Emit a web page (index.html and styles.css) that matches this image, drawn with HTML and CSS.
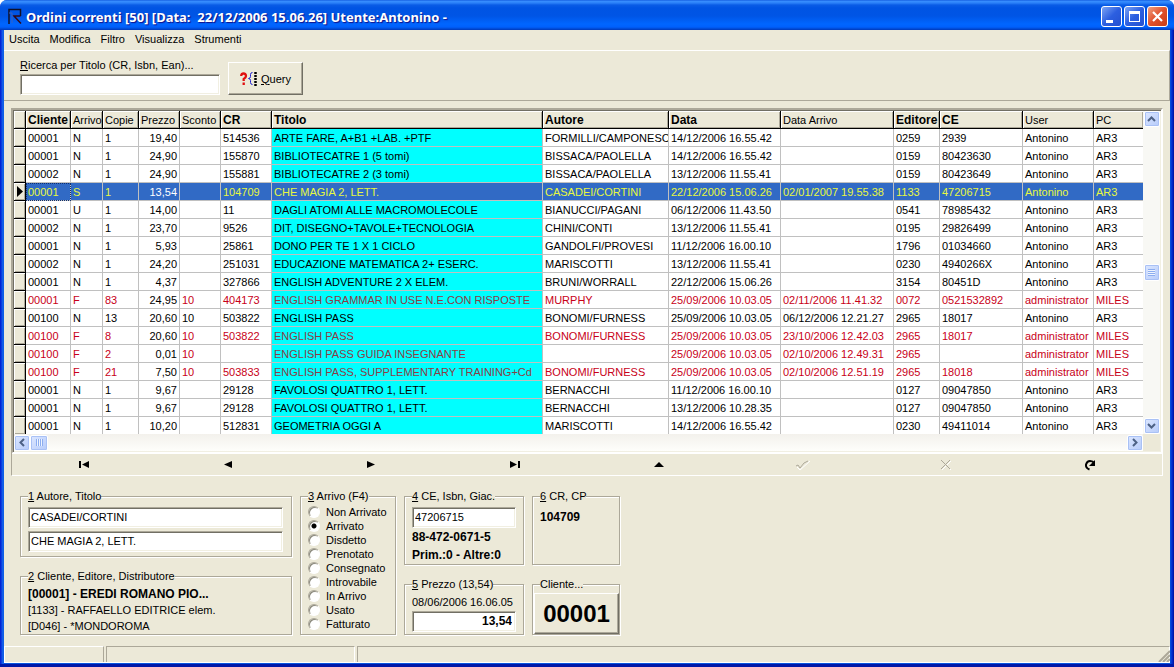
FILE: index.html
```html
<!DOCTYPE html>
<html lang="it">
<head>
<meta charset="utf-8">
<title>Ordini correnti</title>
<link rel="stylesheet" href="styles.css">
</head>
<body>
<div class="window">
  <header class="titlebar">
    <svg class="app-icon" width="16" height="17" viewBox="0 0 16 17" fill="none" stroke-width="1.5"><path d="M1 16V1.500H12.500V8" stroke="#101028"/><path d="M12.500 8H6L13 15.500" stroke="#300818"/><path d="M4 15V5H1" stroke="#3a62c0" stroke-width="1"/></svg>
    <h1>Ordini correnti [50] [Data: &nbsp;22/12/2006 15.06.26] Utente:Antonino -</h1>
    <div class="window-buttons">
      <button class="wbtn" aria-label="Riduci"><svg width="19" height="19"><path d="M4 13h7v3H4z" fill="#fff"/></svg></button>
      <button class="wbtn" aria-label="Ingrandisci"><svg width="19" height="19"><path d="M4 4h11v11H4zM5 7v7h9V7z" fill="#fff" fill-rule="evenodd"/></svg></button>
      <button class="wbtn close" aria-label="Chiudi"><svg width="19" height="19"><path d="M5 5l9 9M14 5l-9 9" stroke="#fff" stroke-width="2.200"/></svg></button>
    </div>
  </header>
  <div class="client">
    <nav class="menu">
      <button>Uscita</button><button>Modifica</button><button>Filtro</button><button>Visualizza</button><button>Strumenti</button>
    </nav>
    <form class="toolbar">
      <div class="search">
        <label for="q"><u>R</u>icerca per Titolo (CR, Isbn, Ean)...</label>
        <input id="q" class="field" type="text">
      </div>
      <button class="query" type="button">
        <svg width="18" height="15" viewBox="0 0 18 15" fill="none"><path d="M1.200 5Q1.200 2.500 3.500 2.500T6 5Q6 6.500 3.700 8V10M3.700 11.500V14" stroke="#e01010" stroke-width="2.300"/><path d="M12.500 1.500Q10.500 1.500 10.500 3.500V5.500Q10.500 7.500 8.500 7.500Q10.500 7.500 10.500 9.500V11.500Q10.500 13.500 12.500 13.500" stroke="#2020d0"/><path d="M15.500 1V15" stroke="#000" stroke-width="2.500" stroke-dasharray="2 1"/></svg>
        <span><u>Q</u>uery</span>
      </button>
    </form>
    <main class="main">
      <section class="panel">
        <div class="grid">
          <div class="grid-body">
            <table>
              <colgroup><col class="c-ind"><col class="c-cli"><col class="c-arr"><col class="c-cop"><col class="c-pre"><col class="c-sco"><col class="c-cr"><col><col class="c-aut"><col class="c-dat"><col class="c-arrd"><col class="c-edi"><col class="c-ce"><col class="c-usr"><col class="c-pc"></colgroup>
              <thead><tr><th></th><th class="b">Cliente</th><th>Arrivo</th><th>Copie</th><th>Prezzo</th><th>Sconto</th><th class="b">CR</th><th class="b">Titolo</th><th class="b">Autore</th><th class="b">Data</th><th>Data Arrivo</th><th class="b">Editore</th><th class="b">CE</th><th>User</th><th>PC</th></tr></thead>
              <tbody id="rows"></tbody>
            </table>
            <div class="vscroll">
              <button class="sbtn" aria-label="Su"><svg width="9" height="6"><path d="M1 5l3.500-3.500L8 5" class="chev"/></svg></button>
              <div class="track"><div class="thumb"></div></div>
              <button class="sbtn" aria-label="Giù"><svg width="9" height="6"><path d="M1 1l3.500 3.500L8 1" class="chev"/></svg></button>
            </div>
          </div>
          <div class="hscroll">
            <div class="hbar">
              <button class="sbtn" aria-label="Sinistra"><svg width="6" height="9"><path d="M5 1L1.500 4.500L5 8" class="chev"/></svg></button>
              <div class="track"><div class="thumb"></div></div>
              <button class="sbtn" aria-label="Destra"><svg width="6" height="9"><path d="M1 1l3.500 3.500L1 8" class="chev"/></svg></button>
            </div>
          </div>
        </div>
        <div class="navigator">
          <button aria-label="Primo"><svg width="12" height="9"><path d="M1 1h2v7H1zM11 1v7L4 4.500z"/></svg></button>
          <button aria-label="Precedente"><svg width="12" height="9"><path d="M10 1v7L2 4.500z"/></svg></button>
          <button aria-label="Successivo"><svg width="12" height="9"><path d="M2 1v7l8-3.500z"/></svg></button>
          <button aria-label="Ultimo"><svg width="12" height="9"><path d="M1 1v7l7-3.500zM9 1h2v7H9z"/></svg></button>
          <button aria-label="Modifica"><svg width="12" height="9"><path d="M1 7h10L6 2z"/></svg></button>
          <button aria-label="Conferma" disabled><svg width="16" height="12" fill="none"><path d="M2 8l3 3L15 2" stroke="#fff"/><path d="M1 7l2-1 2 3 4-5 4-2" stroke="#aca899"/></svg></button>
          <button aria-label="Annulla" disabled><svg width="14" height="12" fill="none"><path d="M3 2l9 9M12 2l-9 9" stroke="#fff"/><path d="M2 1l9 9M11 1l-9 9" stroke="#aca899"/></svg></button>
          <button aria-label="Aggiorna"><svg width="12" height="12"><path d="M5.500 10.500Q1.500 9 2 5.500Q3 2 6 2T10 4" fill="none" stroke="#000" stroke-width="2"/><path d="M11 1v6H5z"/></svg></button>
        </div>
      </section>
      <section class="details">
        <div class="col c1">
          <fieldset class="fs-author">
            <legend><u>1</u> Autore, Titolo</legend>
            <input class="field" aria-label="Autore" value="CASADEI/CORTINI">
            <input class="field" aria-label="Titolo" value="CHE MAGIA 2, LETT.">
          </fieldset>
          <fieldset class="fs-client">
            <legend><u>2</u> Cliente, Editore, Distributore</legend>
            <strong>[00001] - EREDI ROMANO PIO...</strong>
            <p>[1133] - RAFFAELLO EDITRICE elem.</p>
            <p>[D046] - *MONDOROMA</p>
          </fieldset>
        </div>
        <div class="col c2">
          <fieldset class="fs-arrivo">
            <legend><u>3</u> Arrivo (F4)</legend>
            <label><input type="radio" name="arrivo">Non Arrivato</label>
            <label><input type="radio" name="arrivo" checked>Arrivato</label>
            <label><input type="radio" name="arrivo">Disdetto</label>
            <label><input type="radio" name="arrivo">Prenotato</label>
            <label><input type="radio" name="arrivo">Consegnato</label>
            <label><input type="radio" name="arrivo">Introvabile</label>
            <label><input type="radio" name="arrivo">In Arrivo</label>
            <label><input type="radio" name="arrivo">Usato</label>
            <label><input type="radio" name="arrivo">Fatturato</label>
          </fieldset>
        </div>
        <div class="col c3">
          <fieldset class="fs-ce">
            <legend><u>4</u> CE, Isbn, Giac.</legend>
            <input class="field" aria-label="CE" value="47206715">
            <strong>88-472-0671-5</strong>
            <strong>Prim.:0 - Altre:0</strong>
          </fieldset>
          <fieldset class="fs-price">
            <legend><u>5</u> Prezzo (13,54)</legend>
            <p>08/06/2006 16.06.05</p>
            <input class="field price" aria-label="Prezzo" value="13,54">
          </fieldset>
        </div>
        <div class="col c4">
          <fieldset class="fs-cr">
            <legend><u>6</u> CR, CP</legend>
            <strong>104709</strong>
          </fieldset>
          <fieldset class="fs-code">
            <legend>Cliente...</legend>
            <button class="code" type="button">00001</button>
          </fieldset>
        </div>
      </section>
    </main>
    <footer class="status">
      <div class="s1"></div><div class="s2"></div><div class="s3"></div>
      <svg class="grip" width="12" height="12"><path d="M1 12L12 1M5 12l7-7M9 12l3-3" stroke="#aca899" stroke-width="2"/></svg>
    </footer>
  </div>
</div>
<script src="rows.js"></script>
</body>
</html>
```
FILE: rows.js
```js
const A = "Antonino", M = "administrator";
const rows = [
  ["00001","N","1","19,40","","514536","ARTE FARE, A+B1 +LAB. +PTF","FORMILLI/CAMPONESC","14/12/2006 16.55.42","","0259","2939",A,"AR3"],
  ["00001","N","1","24,90","","155870","BIBLIOTECATRE 1 (5 tomi)","BISSACA/PAOLELLA","14/12/2006 16.55.42","","0159","80423630",A,"AR3"],
  ["00002","N","1","24,90","","155881","BIBLIOTECATRE 2 (3 tomi)","BISSACA/PAOLELLA","13/12/2006 11.55.41","","0159","80423649",A,"AR3"],
  ["00001","S","1","13,54","","104709","CHE MAGIA 2, LETT.","CASADEI/CORTINI","22/12/2006 15.06.26","02/01/2007 19.55.38","1133","47206715",A,"AR3"],
  ["00001","U","1","14,00","","11","DAGLI ATOMI ALLE MACROMOLECOLE","BIANUCCI/PAGANI","06/12/2006 11.43.50","","0541","78985432",A,"AR3"],
  ["00002","N","1","23,70","","9526","DIT, DISEGNO+TAVOLE+TECNOLOGIA","CHINI/CONTI","13/12/2006 11.55.41","","0195","29826499",A,"AR3"],
  ["00001","N","1","5,93","","25861","DONO PER TE 1 X 1 CICLO","GANDOLFI/PROVESI","11/12/2006 16.00.10","","1796","01034660",A,"AR3"],
  ["00002","N","1","24,20","","251031","EDUCAZIONE MATEMATICA 2+ ESERC.","MARISCOTTI","13/12/2006 11.55.41","","0230","4940266X",A,"AR3"],
  ["00001","N","1","4,37","","327866","ENGLISH ADVENTURE 2 X ELEM.","BRUNI/WORRALL","22/12/2006 15.06.26","","3154","80451D",A,"AR3"],
  ["00001","F","83","24,95","10","404173","ENGLISH GRAMMAR IN USE N.E.CON RISPOSTE","MURPHY","25/09/2006 10.03.05","02/11/2006 11.41.32","0072","0521532892",M,"MILES"],
  ["00100","N","13","20,60","10","503822","ENGLISH PASS","BONOMI/FURNESS","25/09/2006 10.03.05","06/12/2006 12.21.27","2965","18017",A,"AR3"],
  ["00100","F","8","20,60","10","503822","ENGLISH PASS","BONOMI/FURNESS","25/09/2006 10.03.05","23/10/2006 12.42.03","2965","18017",M,"MILES"],
  ["00100","F","2","0,01","10","","ENGLISH PASS GUIDA INSEGNANTE","","25/09/2006 10.03.05","02/10/2006 12.49.31","2965","",M,"MILES"],
  ["00100","F","21","7,50","10","503833","ENGLISH PASS, SUPPLEMENTARY TRAINING+Cd","BONOMI/FURNESS","25/09/2006 10.03.05","02/10/2006 12.51.19","2965","18018",M,"MILES"],
  ["00001","N","1","9,67","","29128","FAVOLOSI QUATTRO 1, LETT.","BERNACCHI","11/12/2006 16.00.10","","0127","09047850",A,"AR3"],
  ["00001","N","1","9,67","","29128","FAVOLOSI QUATTRO 1, LETT.","BERNACCHI","13/12/2006 10.28.35","","0127","09047850",A,"AR3"],
  ["00001","N","1","10,20","","512831","GEOMETRIA OGGI A","MARISCOTTI","14/12/2006 16.55.42","","0230","49411014",A,"AR3"]
];
const classes = { 3: "price-cell", 6: "title-cell" };
const body = document.getElementById("rows");
for (const row of rows) {
  const tr = body.insertRow();
  const marker = tr.insertCell();
  marker.className = "ind";
  if (row[1] === "F") tr.className = "billed";
  if (row[1] === "S") {
    tr.className = "selected";
    marker.innerHTML = '<svg width="7" height="11"><path d="M1 0l6 5.500L1 11z"/></svg>';
  }
  row.forEach((text, i) => {
    const td = tr.insertCell();
    td.textContent = text;
    if (classes[i]) td.className = classes[i];
  });
}
```
FILE: styles.css
```css
* { box-sizing: border-box; }
body {
  margin: 0;
  background: #fff;
  color: #000;
  font: 11px/14px "Liberation Sans", Arial, sans-serif;
}
button, input { font: inherit; color: inherit; margin: 0; }
button { padding: 0; border: 0; background: none; }
p { margin: 0; }
svg { display: block; flex: none; }

.window {
  min-height: 100vh;
  display: flex;
  flex-direction: column;
  padding: 0 4px 4px;
  background: linear-gradient(90deg, #0019cf 0, #0831d9 1px, #166aee 3px, #0855dd 4px, #0855dd calc(100% - 4px), #0441d8 calc(100% - 3px), #001dc0 calc(100% - 1px), #00138c);
  border-radius: 7px 7px 0 0;
  overflow: hidden;
  box-shadow: inset 0 -3px 0 #0018a8;
}
.titlebar {
  height: 30px;
  margin: 0 -4px;
  padding: 3px 6px 0 8px;
  display: flex;
  align-items: center;
  gap: 2px;
  background: linear-gradient(#0a50d8 0, #3a90ff 1px, #2a80f8 3px, #0a5ce6 5px, #0054e3 8px, #0055e5 16px, #0066ff 24px, #0060fc 27px, #0047d0 29px, #0038b8);
}
.titlebar h1 {
  flex: 1;
  margin: 0;
  color: #fff;
  font: bold 13px/18px "Noto Sans", sans-serif;
  text-shadow: 1px 1px 1px #0f1089;
  white-space: nowrap;
}
.window-buttons { display: flex; gap: 2px; }
.wbtn {
  width: 21px;
  height: 21px;
  border: 1px solid #fff;
  border-radius: 3px;
  background: linear-gradient(135deg, #7ca4f4, #2c5fe0 50%, #2450d0);
}
.wbtn.close { background: linear-gradient(135deg, #f0a080, #e0502c 50%, #c83c14); }

.client {
  flex: 1;
  display: flex;
  flex-direction: column;
  background: #ece9d8;
}
.menu {
  display: flex;
  gap: 10px;
  height: 20px;
  padding: 0 5px 2px;
  align-items: center;
}
.toolbar {
  display: flex;
  gap: 8px;
  padding: 7px 16px 5px;
  border-top: 1px solid #fff;
  border-bottom: 1px solid #aca899;
  border-right: 1px solid #aca899;
}
.search { display: flex; flex-direction: column; gap: 2px; width: 200px; }
.field {
  display: block;
  width: 100%;
  height: 21px;
  padding: 0 2px 1px;
  border: 1px solid;
  border-color: #aca899 #fff #fff #aca899;
  background: #fff;
  box-shadow: inset 1px 1px 0 #716f64, inset -1px -1px 0 #f1efe2;
  outline: 0;
}
.query, .code {
  background: #ece9d8;
  border: 1px solid;
  border-color: #fff #716f64 #716f64 #fff;
  box-shadow: inset -1px -1px 0 #aca899;
}
.query {
  align-self: flex-start;
  display: flex;
  align-items: center;
  justify-content: center;
  gap: 3px;
  width: 75px;
  height: 33px;
  margin-top: 4px;
}

.main { flex: 1; padding: 7px 7px 0; }
.panel { border: 1px solid; border-color: #aca899 #fff #fff #aca899; }
.grid {
  border: 1px solid;
  border-color: #aca899 #fff #fff #aca899;
  padding: 1px;
  box-shadow: inset 1px 1px 0 #716f64, inset -1px -1px 0 #f1efe2;
}
.grid-body { display: flex; }
table {
  flex: 1;
  width: 0;
  table-layout: fixed;
  border-spacing: 0;
  background: #fff;
}
th, td {
  height: 18px;
  padding: 0 0 0 2px;
  overflow: hidden;
  white-space: nowrap;
  text-align: left;
  font-weight: normal;
  line-height: 16px;
  border-right: 1px solid #c0c0c0;
  border-bottom: 1px solid #c0c0c0;
}
th, .ind {
  background: #ece9d8;
  border-color: #000;
  box-shadow: inset 1px 1px 0 #fff, inset -1px -1px 0 #aca899;
}
th.b { font-weight: bold; font-size: 12px; }
th:last-child, td:last-child { border-right: 0; }
.c-ind { width: 12px; } .c-cli { width: 45px; } .c-arr { width: 32px; }
.c-cop { width: 36px; } .c-pre, .c-sco { width: 41px; } .c-cr { width: 51px; }
.c-aut { width: 126px; } .c-dat { width: 112px; } .c-arrd { width: 113px; }
.c-edi { width: 46px; } .c-ce { width: 83px; } .c-usr { width: 71px; } .c-pc { width: 49px; }
.title-cell { background: #0ff; }
.billed { color: #c80018; }
.billed .title-cell { color: #8c3c44; }
.price-cell { padding-right: 2px; text-align: right; color: #000; }
.selected td:not(.ind) { background: #316ac5; color: #e8f840; }
.selected td.price-cell { color: #fff; }
.selected td:nth-child(2) { outline: 1px dotted #103070; outline-offset: -1px; }
tbody tr:last-child td { height: 17px; border-bottom: 0; }

.vscroll { width: 17px; display: flex; flex-direction: column; align-items: center; background: #f8f8f4; }
.hscroll { height: 17px; padding-right: 17px; }
.hbar { height: 17px; display: flex; align-items: center; background: linear-gradient(#f3f1ec, #fefefb); }
.track { flex: 1; display: flex; }
.sbtn, .thumb {
  display: flex;
  align-items: center;
  justify-content: center;
  width: 16px;
  height: 16px;
  border: 1px solid #fff;
  border-radius: 2px;
  background: linear-gradient(135deg, #dce7ff, #b6cbfa);
  box-shadow: inset 0 0 0 1px #a9c1f5;
}
.thumb::before {
  content: "";
  width: 7px;
  height: 7px;
  background: repeating-linear-gradient(90deg, #8cadf0 0 1px, #eef4fe 1px 2px);
}
.vscroll .track { flex-direction: column; justify-content: center; }
.vscroll .thumb { height: 17px; }
.vscroll .thumb::before { background: repeating-linear-gradient(#8cadf0 0 1px, #eef4fe 1px 2px); }
.hscroll .thumb { width: 18px; }
.chev { fill: none; stroke: #4d6185; stroke-width: 2; }

.navigator { display: flex; height: 22px; border-top: 1px solid #fff; }
.navigator button { flex: 1; display: flex; align-items: center; justify-content: center; }

.details { display: flex; gap: 8px; padding: 14px 9px 11px; }
.col { display: flex; flex-direction: column; gap: 13px; }
.c1 { width: 272px; } .c2 { width: 96px; } .c3 { width: 120px; } .c4 { width: 88px; }
fieldset {
  min-width: 0;
  margin: 0;
  padding: 0 7px;
  border: 1px solid #aca899;
  box-shadow: 1px 1px 0 #fff, inset 1px 1px 0 #fff;
}
legend { padding: 0; line-height: 13px; background: #ece9d8; }
.col strong { display: block; font-size: 12px; white-space: nowrap; }
.fs-author { padding: 4px 8px 4px 7px; }
.fs-author .field + .field { margin-top: 3px; }
.fs-client { padding-top: 3px; line-height: 16px; }
.fs-arrivo { flex: 1; padding-top: 2px; padding-right: 0; }
.fs-arrivo label { display: flex; align-items: center; gap: 6px; height: 14px; white-space: nowrap; }
.fs-arrivo input {
  appearance: none;
  width: 12px;
  height: 12px;
  border: 1px solid;
  border-color: #aca899 #fff #fff #aca899;
  border-radius: 50%;
  background: #fff;
  box-shadow: inset 1px 1px 0 #8a887c;
}
.fs-arrivo input:checked { background: radial-gradient(circle, #000 2px, #fff 3px); }
.fs-ce { padding-top: 4px; }
.fs-ce strong { line-height: 18px; }
.fs-price { padding-top: 3px; padding-bottom: 2px; line-height: 16px; }
.price { margin-top: 1px; padding-right: 3px; text-align: right; font-weight: bold; font-size: 12px; }
.fs-cr { height: 75px; padding-top: 7px; }
.fs-code { padding: 2px 0 0 1px; }
.fs-code legend { margin-left: 6px; }
.code { display: block; width: 100%; height: 41px; font: bold 24px/36px "Liberation Sans", Arial, sans-serif; }

.status { display: flex; gap: 2px; height: 17px; border-bottom: 1px solid #fff; }
.status div { border-top: 1px solid #aca899; border-left: 1px solid #aca899; border-right: 1px solid #fff; }
.status .s1 { width: 100px; border-color: #fff #aca899 #fff #fff; }
.s2 { width: 249px; }
.s3 { flex: 1; }
.grip { align-self: flex-end; margin-left: -14px; }
```
